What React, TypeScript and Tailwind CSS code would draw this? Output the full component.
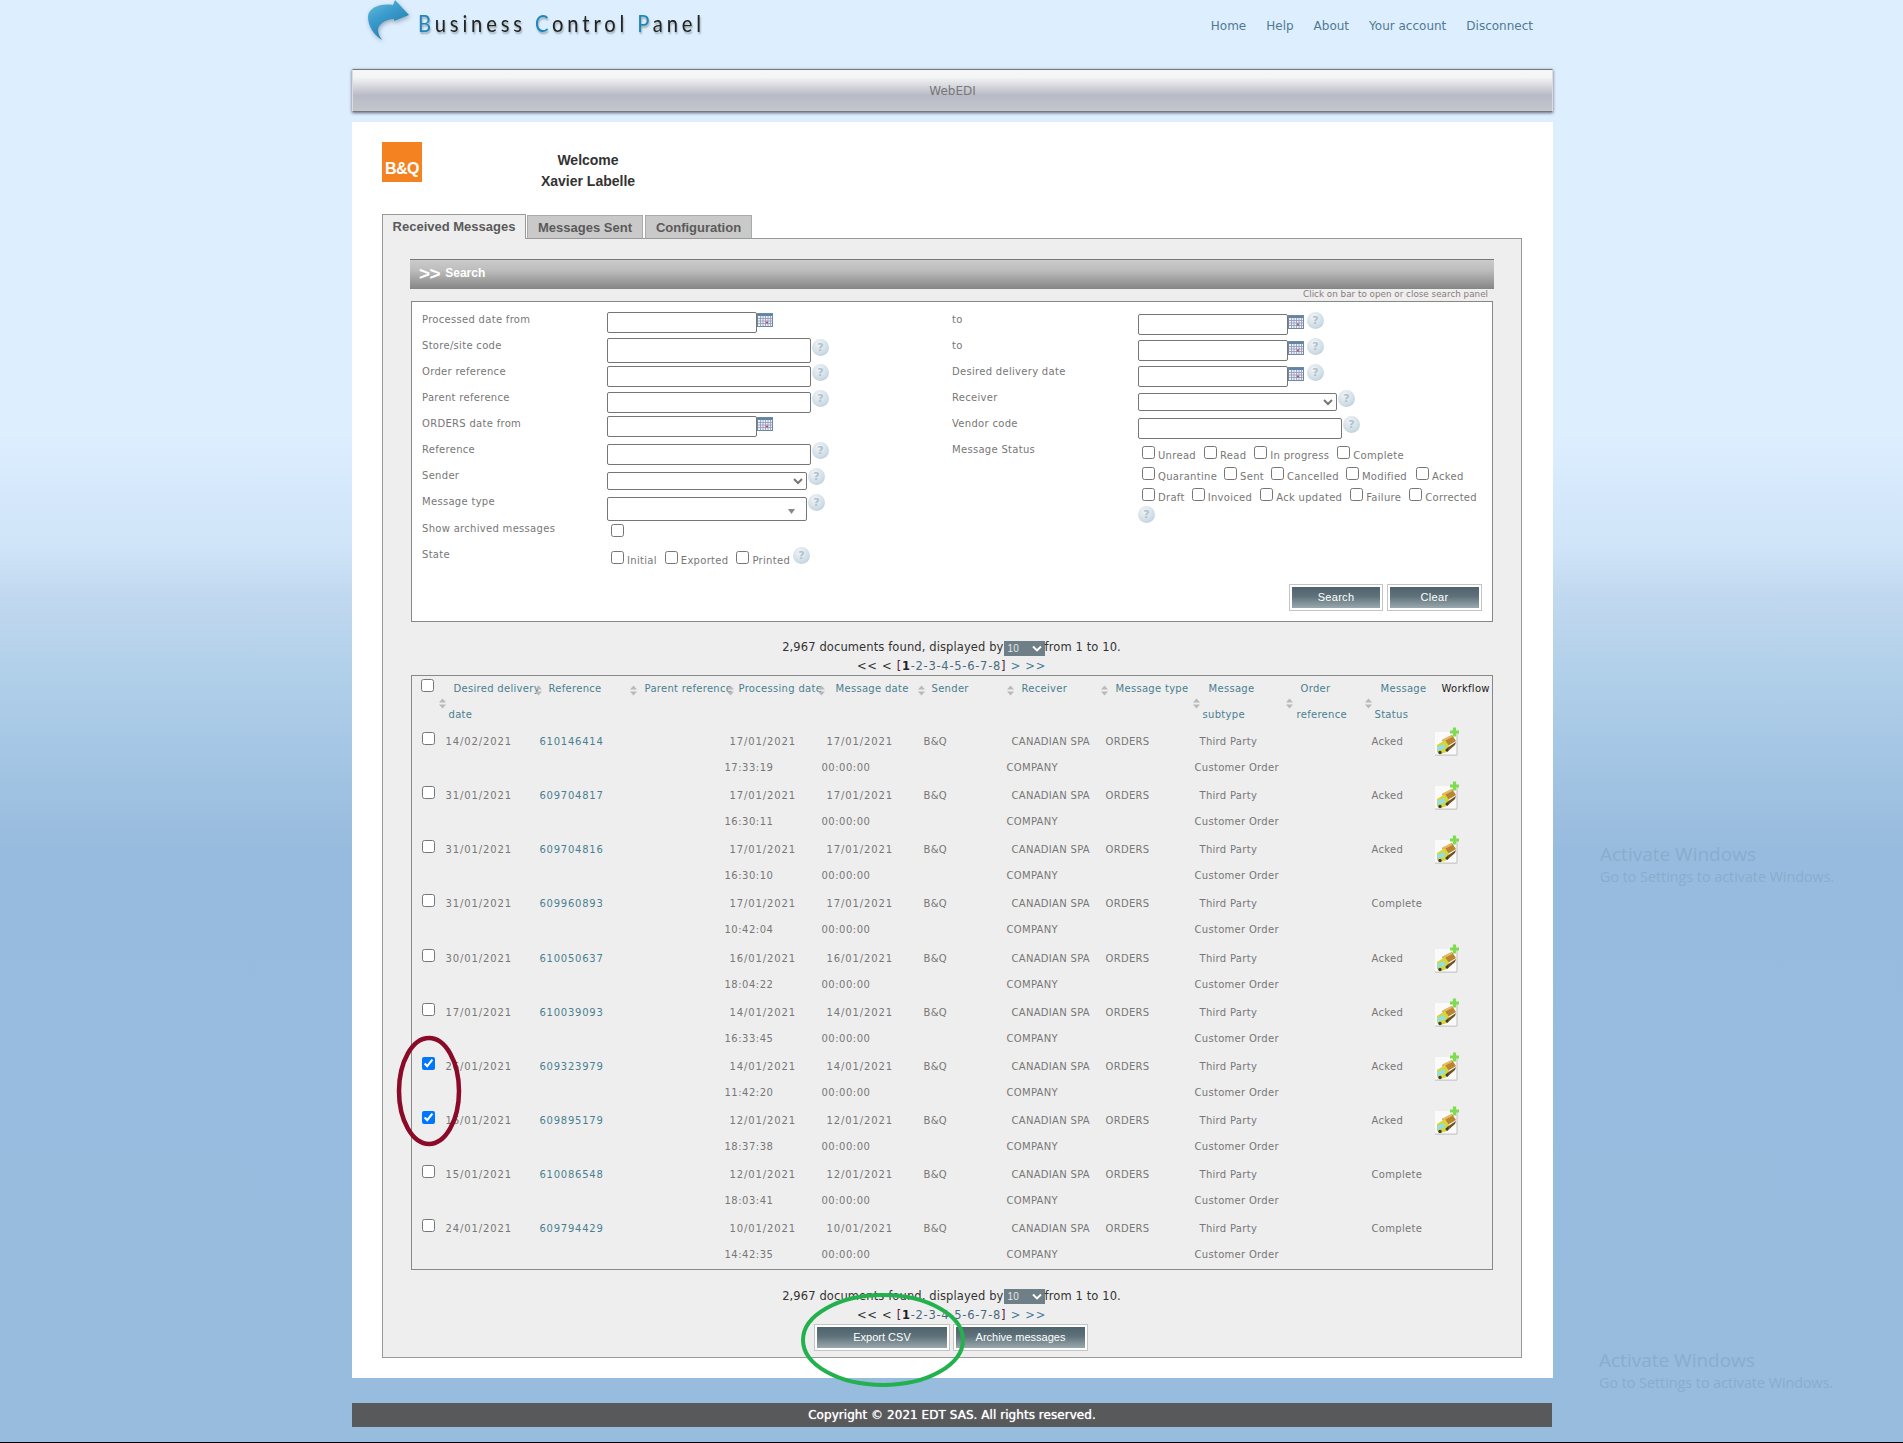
import React from "react";

const F = "[font-family:'DejaVu_Sans',sans-serif]";

function Help() {
  return (
    <span className="inline-flex h-[17px] w-[17px] shrink-0 items-center justify-center rounded-full bg-[radial-gradient(circle_at_40%_30%,#f0f4f7,#cfdde6_60%,#aabfcc)] text-[11px] font-bold leading-none text-[#b2c0ca]">
      ?
    </span>
  );
}

function Cal() {
  return (
    <svg width="16" height="14" viewBox="0 0 16 14" className="shrink-0">
      <rect x="0.5" y="0.5" width="15" height="13" fill="#eef0f8" stroke="#6f8aa0" />
      <rect x="1" y="1" width="14" height="2" fill="#5f86a8" />
      <path d="M1 5.5H15M1 8H15M1 10.5H15M3.5 3V13M6 3V13M8.5 3V13M11 3V13M13.5 3V13" stroke="#8f97b8" strokeWidth="0.8" />
      <rect x="9" y="8.5" width="2" height="2" fill="#b05a6a" />
    </svg>
  );
}

function Field({ w, h }: { w: number; h: number }) {
  return <input readOnly style={{ width: w, height: h }} className="shrink-0 rounded-[2px] border border-[#767676] bg-white" />;
}

function Sel({ w, h }: { w: number; h: number }) {
  return (
    <select style={{ width: w, height: h }} className="shrink-0 rounded-[2px] border border-[#767676] bg-white text-[11px]">
      <option></option>
    </select>
  );
}

function Box({ on }: { on?: boolean }) {
  return <input type="checkbox" readOnly defaultChecked={on} className="h-[13px] w-[13px] shrink-0" />;
}

function Check({ label, gap }: { label: string; gap: number }) {
  return (
    <span style={{ marginRight: gap }} className="inline-flex shrink-0 items-start">
      <Box />
      <span className="ml-[3px] mt-[3px] leading-[13px]">{label}</span>
    </span>
  );
}

function Row({ label, pt, lw, lt = 0, children }: { label: string; pt: number; lw: number; lt?: number; children?: React.ReactNode }) {
  return (
    <div className="flex h-[26px]">
      <div style={{ width: lw, paddingTop: lt }} className="shrink-0 leading-[26px]">{label}</div>
      <div style={{ paddingTop: pt }} className="flex items-start">{children}</div>
    </div>
  );
}

function Btn({ label, w }: { label: string; w: number }) {
  return (
    <button style={{ width: w }} className="h-[25px] border-2 border-white bg-[linear-gradient(#4f636c,#5f727b_45%,#9aa8ae)] text-[11px] text-white shadow-[0_0_0_1px_#c4c4c4] [font-family:'Liberation_Sans',sans-serif]">
      {label}
    </button>
  );
}

function Info({ mt }: { mt: number }) {
  return (
    <div style={{ marginTop: mt }} className="w-[1083px] text-center text-[11.5px] tracking-[0.11px] text-[#333]">
      <div className="flex h-[18px] items-center justify-center">
        <span>2,967 documents found, displayed by</span>
        <span className="flex h-[15px] w-[41px] items-center justify-between bg-[#6f7f88] pl-[4px] pr-[3px] text-[10px] text-[#e6e6e6] [font-family:'Liberation_Sans',sans-serif]">
          10
          <svg width="10" height="7" viewBox="0 0 10 7"><path d="M1 1.5L5 5.5L9 1.5" fill="none" stroke="#fff" strokeWidth="1.8" /></svg>
        </span>
        <span>from 1 to 10.</span>
      </div>
      <div className="h-[18px] leading-[18px] tracking-[0.72px]">
        {"<< < "}
        <span className="text-[#5a2040]">[</span>
        <b className="text-[#222]">1</b>
        <span className="text-[#4a6a80]">-2-3-4-5-6-7-8</span>
        <span className="text-[#5a2040]">]</span>
        <span className="text-[#4a7a96]">{" > >>"}</span>
      </div>
    </div>
  );
}

function Sort({ x, y }: { x: number; y: number }) {
  return (
    <svg width="7" height="11" viewBox="0 0 7 11" style={{ left: x, top: y }} className="absolute">
      <path d="M3.5 0.5L7 4.5H0Z M3.5 10.5L7 6.5H0Z" fill="#b9b9b9" />
    </svg>
  );
}

function Truck() {
  return (
    <svg width="26" height="29" viewBox="0 0 26 29" className="-mt-[2px] block">
      <rect x="0" y="5" width="22" height="23" fill="#fafafa" />
      <path d="M0 28.2H22M22 5V28" stroke="#c8c8c8" strokeWidth="1.2" />
      <path d="M7 13L17 8L21 14L11 20Z" fill="#b9852f" />
      <path d="M8 13.5L17 9" stroke="#e6b860" strokeWidth="2" />
      <path d="M2 18L10 13L14 19L12 25L6 27L2 25Z" fill="#d8d43a" />
      <path d="M2 20L9 17L10.5 21L3 24Z" fill="#8fe0e6" />
      <path d="M12 21L21 15L20 18L12 25Z" fill="#6d5226" />
      <circle cx="5" cy="25.5" r="1.7" fill="#3a3a3a" />
      <circle cx="12" cy="23" r="1.5" fill="#3a3a3a" />
      <path d="M19.5 0.5V9.5M15 5H24" stroke="#7fdc50" strokeWidth="3.2" />
    </svg>
  );
}

const rows: [string, string, string, string, string, boolean, string?][] = [
  ["14/02/2021", "610146414", "17/01/2021", "17:33:19", "Acked", true],
  ["31/01/2021", "609704817", "17/01/2021", "16:30:11", "Acked", true],
  ["31/01/2021", "609704816", "17/01/2021", "16:30:10", "Acked", true],
  ["31/01/2021", "609960893", "17/01/2021", "10:42:04", "Complete", false],
  ["30/01/2021", "610050637", "16/01/2021", "18:04:22", "Acked", true],
  ["17/01/2021", "610039093", "14/01/2021", "16:33:45", "Acked", true],
  ["26/01/2021", "609323979", "14/01/2021", "11:42:20", "Acked", true, "x"],
  ["16/01/2021", "609895179", "12/01/2021", "18:37:38", "Acked", true, "x"],
  ["15/01/2021", "610086548", "12/01/2021", "18:03:41", "Complete", false],
  ["24/01/2021", "609794429", "10/01/2021", "14:42:35", "Complete", false],
];

const cols = [29, 94, 105, 85, 97, 97, 88, 94, 94, 97, 75, 68, 58];

function Th({ a, b, indent, bi = 8, sort, dark }: { a: string; b?: string; indent: number; bi?: number; sort?: [number, number]; dark?: boolean }) {
  return (
    <th className={"relative whitespace-nowrap p-0 text-left align-top font-normal leading-[26px] " + (dark ? "text-[#222]" : "text-[#4a7f90]")}>
      <div style={{ paddingLeft: indent }}>{a}</div>
      {b && <div style={{ paddingLeft: bi }} className="whitespace-nowrap">{b}</div>}
      {sort && <Sort x={sort[0]} y={sort[1]} />}
    </th>
  );
}

function Two({ a, b, cls = "", acls = "", bcls = "", pt = 0, pb = 2 }: { a: string; b?: string; cls?: string; acls?: string; bcls?: string; pt?: number; pb?: number }) {
  return (
    <td style={{ paddingTop: pt, paddingBottom: pb }} className={"whitespace-nowrap p-0 align-top leading-[26px] " + cls}>
      <div className={"pl-[5px] " + acls}>{a}</div>
      {b && <div className={bcls}>{b}</div>}
    </td>
  );
}

export default function App() {
  return (
    <div className={"relative h-[1443px] w-full overflow-hidden border-b border-black bg-[linear-gradient(#ddeeff_0,#ddeeff_30%,#cfe4f8_38%,#c2d9f0_41%,#b0cfe9_47%,#97bbde_59%,#97bcde_100%)] " + F}>
      <div className="ml-[352px] w-[1201px]">
        <header className="relative flex h-[69px] items-start justify-between">
          <div className="flex">
            <svg width="44" height="44" viewBox="0 0 44 44" className="ml-[16px] shrink-0 [filter:drop-shadow(1px_2px_2px_#9ab)]">
              <defs>
                <linearGradient id="ar" x1="0" y1="0" x2="0.6" y2="1">
                  <stop offset="0" stopColor="#6cbde0" />
                  <stop offset="0.45" stopColor="#3a9bcc" />
                  <stop offset="1" stopColor="#1b7cab" />
                </linearGradient>
              </defs>
              <path d="M27 0L41 15L26 21L26 19C18 19 10 24 10 30C10 34 12 37 14 40C6 35 0 26 0 17C0 8 12 3 25 5Z" fill="url(#ar)" />
            </svg>
            <div className="ml-[6px] mt-[7px] origin-left scale-x-[0.84] whitespace-nowrap text-[24px] leading-[32px] tracking-[4.6px] text-[#222] [font-family:'Lato',sans-serif] [text-shadow:1px_2px_2px_#9aa]">
              <span className="text-[#1f86bd]">B</span>usiness <span className="text-[#1f86bd]">C</span>ontrol <span className="text-[#1f86bd]">P</span>anel
            </div>
          </div>
          <nav className="mr-[20px] mt-[17px] flex gap-[20px] text-[12px] leading-[18px] text-[#4f7a92]">
            <span>Home</span><span>Help</span><span>About</span><span>Your account</span><span>Disconnect</span>
          </nav>
        </header>

        <div className="flex h-[43px] items-center justify-center border-y border-y-[#777] border-x border-x-[#ddd] bg-[linear-gradient(#f6f7f7_0,#f3f4f4_18%,#b8bac6_62%,#c4c6ce_100%)] text-[12px] text-[#777] shadow-[0_1px_3px_#667]">
          WebEDI
        </div>

        <main className="mt-[10px] h-[1256px] bg-white pl-[30px] pt-[20px]">
          <div className="flex h-[72px]">
            <div className="flex h-[40px] w-[40px] items-end justify-center bg-[#f58220] pb-[3px] text-[16px] font-bold leading-[20px] tracking-[-0.5px] text-white [font-family:'Liberation_Sans',sans-serif]">
              B&amp;Q
            </div>
            <div className="ml-[119px] w-[94px] whitespace-nowrap pt-[8px] text-center text-[14px] font-bold leading-[21px] text-[#333] [font-family:'Liberation_Sans',sans-serif]">
              <div className="-ml-[4px] w-[102px]">Welcome</div>
              <div className="-ml-[4px] w-[102px]">Xavier Labelle</div>
            </div>
          </div>

          <div className="relative z-10 -mb-px flex h-[25px] items-end text-[13px] font-bold text-[#5a5a5a] [font-family:'Liberation_Sans',sans-serif]">
            <div className="flex h-[25px] w-[144px] items-center justify-center border border-b-0 border-[#999] bg-[#eeeeee] pb-[1px]">Received Messages</div>
            <div className="ml-px flex h-[24px] w-[116px] items-center justify-center border border-b-[#999] border-[#aaa] bg-[#c9c9c9] pt-[1px]">Messages Sent</div>
            <div className="ml-[2px] flex h-[24px] w-[107px] items-center justify-center border border-b-[#999] border-[#aaa] bg-[#c9c9c9] pt-[1px]">Configuration</div>
          </div>

          <section className="h-[1120px] w-[1140px] border border-[#999] bg-[#eeeeee] pl-[27px] pt-[20px]">
            <div className="flex h-[30px] w-[1084px] items-center border-t border-t-[#777] bg-[linear-gradient(#cbcbcb,#bdbdbd_35%,#858585)] pb-[3px] pl-[9px] text-[12px] font-bold text-white [font-family:'Liberation_Sans',sans-serif]">
              <span className="mr-[5px] text-[19px] leading-none tracking-[-0.5px]">&gt;&gt;</span> Search
            </div>
            <div className="h-[12px] w-[1078px] text-right text-[8.8px] leading-[11px] text-[#8a7a7a]">Click on bar to open or close search panel</div>

            <div className="ml-[1px] flex h-[321px] w-[1082px] border border-[#888] bg-white pl-[10px] pt-[5px] text-[10px] tracking-[0.3px] text-[#777]">
              <div className="w-[530px]">
                <Row label="Processed date from" lw={185} pt={5}><Field w={150} h={21} /><span className="mt-[1px]"><Cal /></span></Row>
                <Row label="Store/site code" lw={185} pt={5}><Field w={204} h={25} /><span className="ml-[1px] mt-[1px]"><Help /></span></Row>
                <Row label="Order reference" lw={185} pt={7}><Field w={204} h={21} /><span className="ml-[1px] -mt-[2px]"><Help /></span></Row>
                <Row label="Parent reference" lw={185} pt={7}><Field w={204} h={21} /><span className="ml-[1px] -mt-[2px]"><Help /></span></Row>
                <Row label="ORDERS date from" lw={185} pt={5}><Field w={150} h={21} /><span className="mt-[1px]"><Cal /></span></Row>
                <Row label="Reference" lw={185} pt={7}><Field w={204} h={21} /><span className="ml-[1px] -mt-[2px]"><Help /></span></Row>
                <Row label="Sender" lw={185} pt={9}><Sel w={200} h={18} /><span className="ml-[1px] -mt-[4px]"><Help /></span></Row>
                <Row label="Message type" lw={185} pt={8}>
                  <div className="relative h-[24px] w-[200px] rounded-[2px] border border-[#767676] bg-white">
                    <svg width="7" height="5" viewBox="0 0 7 5" className="absolute right-[11px] top-[11px]"><path d="M0 0H7L3.5 5Z" fill="#888" /></svg>
                  </div>
                  <span className="ml-[1px] -mt-[3px]"><Help /></span>
                </Row>
                <Row label="Show archived messages" lw={189} pt={9} lt={1}><Box /></Row>
                <Row label="State" lw={189} pt={10} lt={1}>
                  <Check label="Initial" gap={8} />
                  <Check label="Exported" gap={8} />
                  <Check label="Printed" gap={3} />
                  <span className="-mt-[4px]"><Help /></span>
                </Row>
              </div>
              <div className="relative w-[530px]">
                <Row label="to" lw={186} pt={7}><Field w={150} h={21} /><span className="mt-[1px]"><Cal /></span><span className="ml-[3px] -mt-[2px]"><Help /></span></Row>
                <Row label="to" lw={186} pt={7}><Field w={150} h={21} /><span className="mt-[1px]"><Cal /></span><span className="ml-[3px] -mt-[2px]"><Help /></span></Row>
                <Row label="Desired delivery date" lw={186} pt={7}><Field w={150} h={21} /><span className="mt-[1px]"><Cal /></span><span className="ml-[3px] -mt-[2px]"><Help /></span></Row>
                <Row label="Receiver" lw={186} pt={8}><Sel w={199} h={18} /><span className="ml-[1px] -mt-[3px]"><Help /></span></Row>
                <Row label="Vendor code" lw={186} pt={7}><Field w={204} h={21} /><span className="ml-[1px] -mt-[2px]"><Help /></span></Row>
                <Row label="Message Status" lw={186} pt={9}>
                  <div className="w-[310px]">
                    <div className="flex h-[21px] pl-[4px]">
                      <Check label="Unread" gap={8} /><Check label="Read" gap={8} /><Check label="In progress" gap={8} /><Check label="Complete" gap={0} />
                    </div>
                    <div className="flex h-[21px] pl-[4px]">
                      <Check label="Quarantine" gap={7} /><Check label="Sent" gap={7} /><Check label="Cancelled" gap={7} /><Check label="Modified" gap={9} /><Check label="Acked" gap={0} />
                    </div>
                    <div className="flex h-[21px] pl-[4px]">
                      <Check label="Draft" gap={7} /><Check label="Invoiced" gap={8} /><Check label="Ack updated" gap={8} /><Check label="Failure" gap={8} /><Check label="Corrected" gap={0} />
                    </div>
                    <div className="-mt-[3px] flex"><Help /></div>
                  </div>
                </Row>
                <div className="absolute left-[338px] top-[278px] flex gap-[6px]">
                  <Btn label="Search" w={92} />
                  <Btn label="Clear" w={93} />
                </div>
              </div>
            </div>

            <Info mt={17} />

            <table className="ml-[1px] w-[1081px] table-fixed border-collapse border border-[#888] text-[10px] tracking-[0.3px] text-[#777]">
              <colgroup>
                {cols.map((c, i) => <col key={i} style={{ width: c }} />)}
              </colgroup>
              <thead>
                <tr className="h-[53px]">
                  <th className="relative p-0 align-top"><span className="absolute left-[9px] top-[3px] flex"><Box /></span><Sort x={27} y={22} /></th>
                  <Th a="Desired delivery" b="date" indent={13} sort={[94, 9]} />
                  <Th a="Reference" indent={14} sort={[95, 9]} />
                  <Th a="Parent reference" indent={5} sort={[87, 9]} />
                  <Th a="Processing date" indent={14} sort={[93, 9]} />
                  <Th a="Message date" indent={14} sort={[96, 9]} />
                  <Th a="Sender" indent={13} sort={[88, 9]} />
                  <Th a="Receiver" indent={15} sort={[94, 9]} />
                  <Th a="Message type" indent={15} />
                  <Th a="Message" b="subtype" indent={14} sort={[-2, 22]} />
                  <Th a="Order" b="reference" indent={9} bi={5} sort={[-6, 22]} />
                  <Th a="Message" b="Status" indent={14} sort={[-2, 22]} />
                  <Th a="Workflow" indent={7} dark />
                </tr>
              </thead>
              <tbody>
                {rows.map((r, i) => {
                  const pt = i === 4 ? 1 : 0;
                  const pb = i === 9 ? 1 : 2;
                  return (
                    <tr key={i}>
                      <td style={{ paddingTop: 3 + pt }} className="p-0 pl-[10px] align-top"><span className="flex"><Box on={!!r[6]} /></span></td>
                      <Two pt={pt} pb={pb} a={r[0]} acls="tracking-[0.9px]" />
                      <Two pt={pt} pb={pb} a={r[1]} cls="text-[#4a7f90]" acls="tracking-[0.75px]" />
                      <Two pt={pt} pb={pb} a="" />
                      <Two pt={pt} pb={pb} a={r[2]} b={r[3]} acls="tracking-[0.9px]" bcls="tracking-[0.5px]" />
                      <Two pt={pt} pb={pb} a={r[2]} b="00:00:00" acls="tracking-[0.9px]" bcls="tracking-[0.5px]" />
                      <Two pt={pt} pb={pb} a="B&Q" />
                      <Two pt={pt} pb={pb} a="CANADIAN SPA" b="COMPANY" />
                      <Two pt={pt} pb={pb} a="ORDERS" />
                      <Two pt={pt} pb={pb} a="Third Party" b="Customer Order" />
                      <Two pt={pt} pb={pb} a="" />
                      <Two pt={pt} pb={pb} a={r[4]} />
                      <td style={{ paddingTop: pt }} className="p-0 align-top">{r[5] && <Truck />}</td>
                    </tr>
                  );
                })}
              </tbody>
            </table>

            <Info mt={18} />
            <div className="ml-[405px] mt-[1px] flex gap-[5px]">
              <Btn label="Export CSV" w={134} />
              <Btn label="Archive messages" w={133} />
            </div>
          </section>
        </main>

        <footer className="mt-[25px] flex h-[24px] w-[1200px] items-center justify-center bg-[#58595b] text-[12px] tracking-[0.05px] text-white [text-shadow:0_0_1px_#fff]">
          Copyright © 2021 EDT SAS. All rights reserved.
        </footer>
      </div>

      <svg width="66" height="112" viewBox="0 0 66 112" className="absolute left-[396px] top-[1035px]">
        <ellipse cx="33" cy="56" rx="30" ry="53" fill="none" stroke="#8b0a28" strokeWidth="4.5" />
      </svg>
      <svg width="168" height="96" viewBox="0 0 168 96" className="absolute left-[799px] top-[1292px]">
        <ellipse cx="84" cy="48" rx="80" ry="45" fill="none" stroke="#22b14c" strokeWidth="4" />
      </svg>

      <div className="absolute left-[1600px] top-[841px] whitespace-nowrap text-[#8aaccd] [font-family:'Open_Sans',sans-serif]">
        <div className="text-[19px] leading-[26px]">Activate Windows</div>
        <div className="text-[14.3px] leading-[20px]">Go to Settings to activate Windows.</div>
      </div>
      <div className="absolute left-[1599px] top-[1347px] whitespace-nowrap text-[#8aaccd] [font-family:'Open_Sans',sans-serif]">
        <div className="text-[19px] leading-[26px]">Activate Windows</div>
        <div className="text-[14.3px] leading-[20px]">Go to Settings to activate Windows.</div>
      </div>
    </div>
  );
}
